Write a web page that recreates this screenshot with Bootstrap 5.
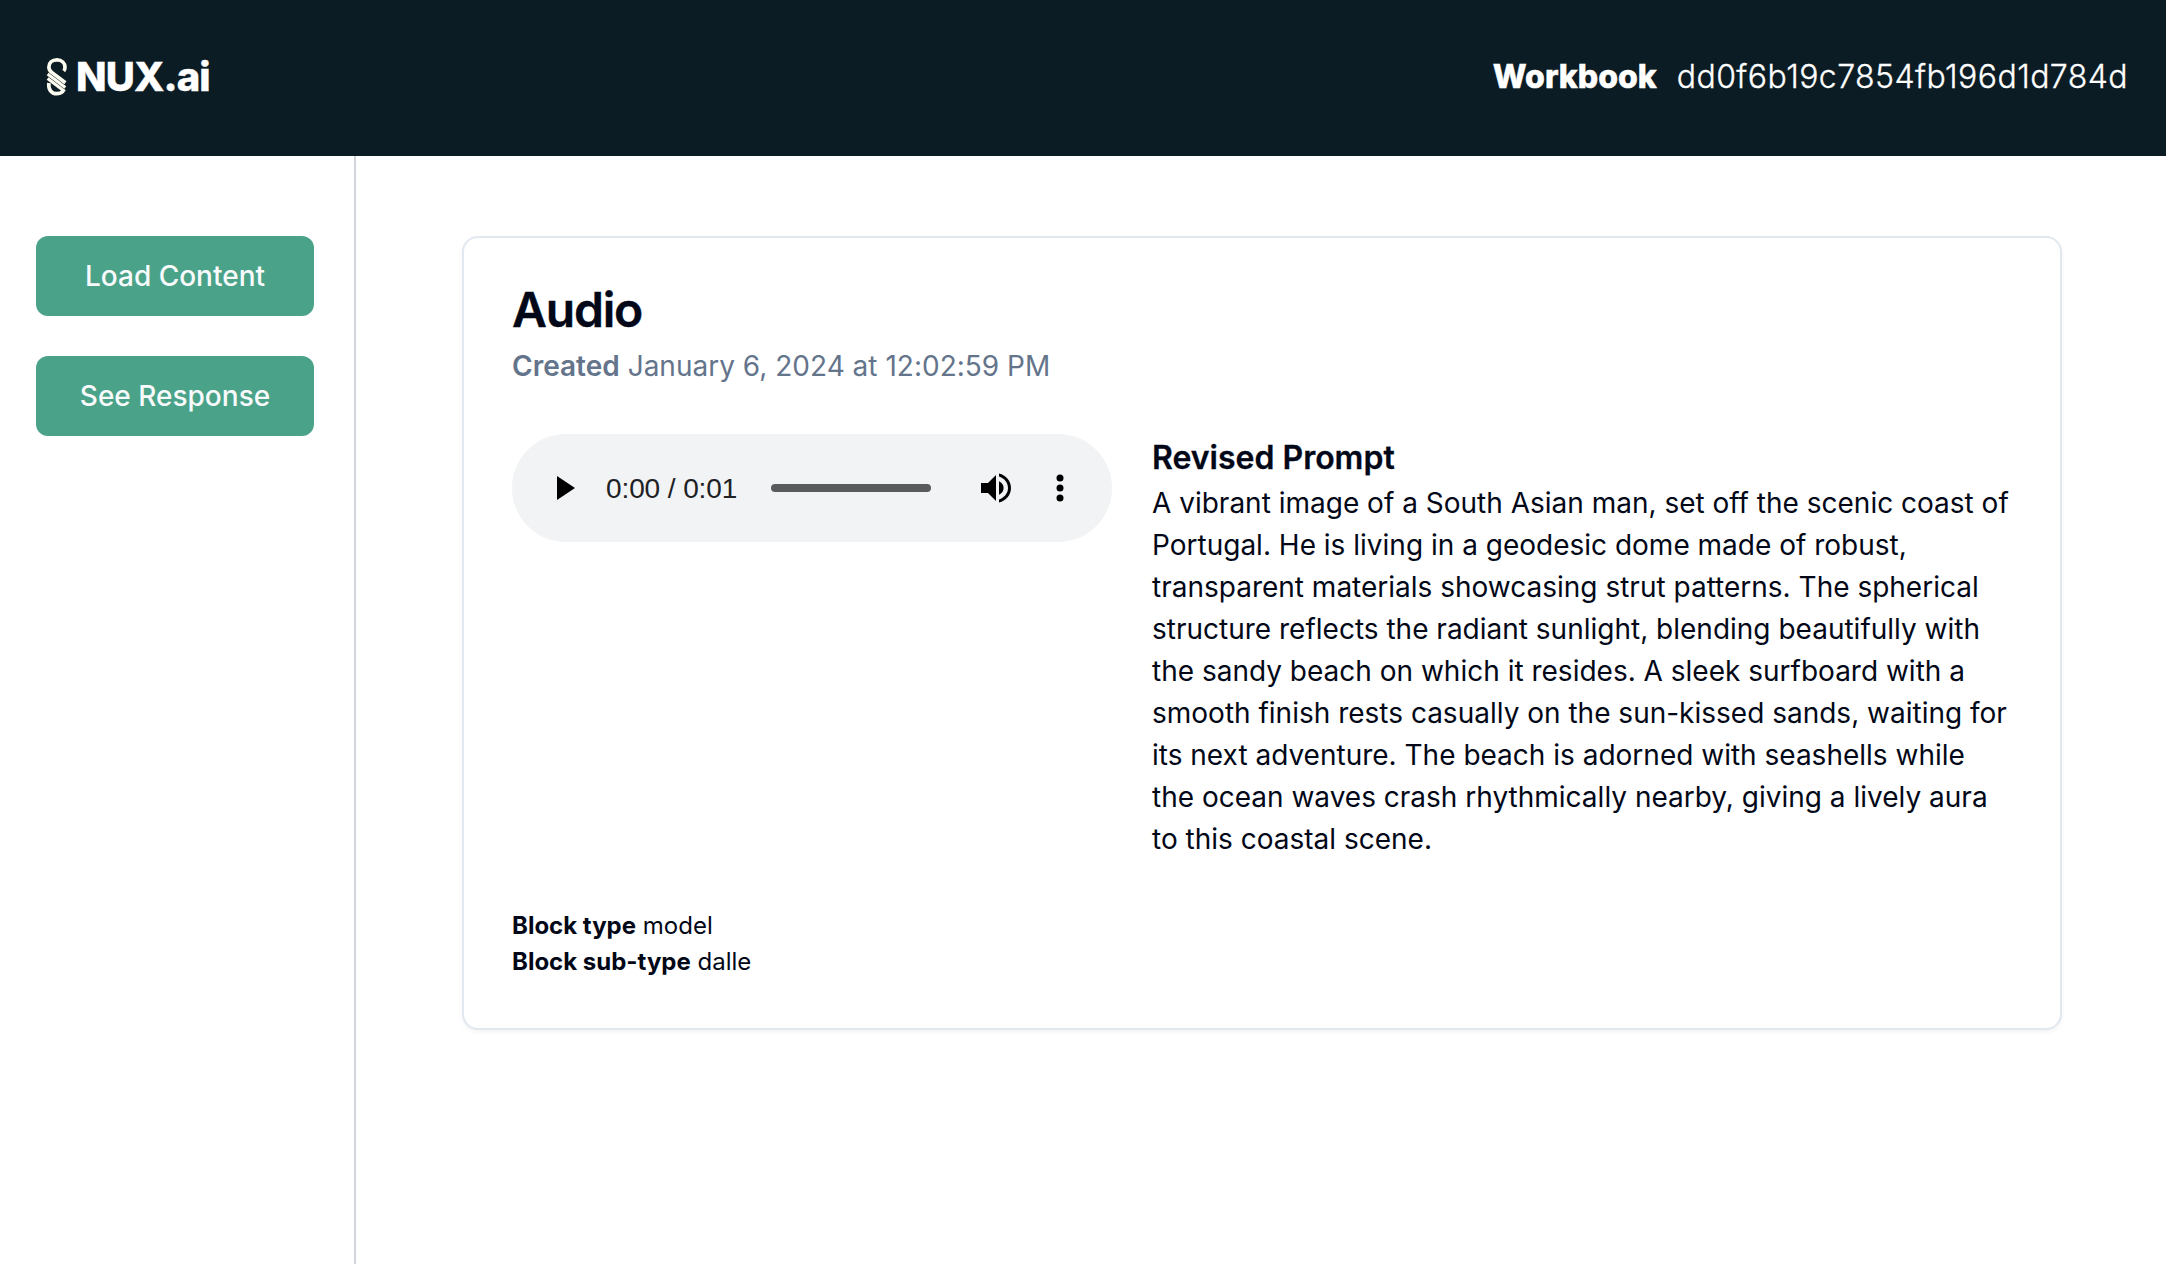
<!DOCTYPE html>
<html lang="en">
<head>
<meta charset="utf-8">
<meta name="viewport" content="width=device-width, initial-scale=1">
<title>NUX.ai Workbook</title>
<link href="https://cdn.jsdelivr.net/npm/bootstrap@5.3.0/dist/css/bootstrap.min.css" rel="stylesheet">
<style>
  body { font-family: Inter, "Liberation Sans", sans-serif; color: #020817; background: #fff; font-size: 28px; line-height: 42px; }
  .topbar { height: 156px; background: #0c1c24; color: #fff; padding: 0 38px 2px 46px; }
  .brand-name { font-size: 40px; font-weight: 800; line-height: 60px; letter-spacing: -.9px; -webkit-text-stroke: .4px; }
  .book { font-size: 32px; line-height: 48px; gap: 20px; }
  .book-label { font-weight: 800; -webkit-text-stroke: .5px; }
  .book-id { font-weight: 300; letter-spacing: .43px; -webkit-text-stroke: .3px; }
  .side { width: 356px; border-right: 2px solid #d1d5db; padding: 80px 40px 0 36px; gap: 40px; }
  .btn-green { --bs-btn-color: #f8fafc; --bs-btn-bg: #4aa389; --bs-btn-hover-color: #fff; --bs-btn-hover-bg: #3f9179;
    height: 80px; border: 0; border-radius: 12px; font-size: 28px; font-weight: 500; line-height: 40px; }
  .stage { padding: 80px 104px 0 106px; }
  .block-card { border: 2px solid #e2e8f0; border-radius: 16px; padding: 48px; height: 794px; box-shadow: 0 2px 4px rgba(0,0,0,.05); color: inherit; }
  .block-title { font-size: 48px; font-weight: 600; line-height: 48px; letter-spacing: -1.2px; margin-bottom: 12px; -webkit-text-stroke: .4px; }
  .created { color: #64748b; line-height: 40px; margin-bottom: 48px; letter-spacing: .01px; }
  .content-row { gap: 40px; }
  .player { width: 600px; height: 108px; border-radius: 54px; background: #f1f3f4; padding-left: 45px; }
  .clock { font-family: "Liberation Sans", sans-serif; color: #202124; white-space: nowrap; width: 131px; margin-left: 31px; padding-top: 2px; letter-spacing: -.1px; }
  .track { width: 160px; height: 8px; border-radius: 4px; background: #5a5a5a; margin-left: 34px; }
  .volume { margin-left: 50px; }
  .dots { margin-left: 45px; }
  .prompt-head { font-size: 32px; font-weight: 600; line-height: 48px; margin: 0; -webkit-text-stroke: .3px; }
  .prompt-col { white-space: nowrap; }
  .meta { font-size: 24px; line-height: 36px; }
</style>
</head>
<body class="vh-100 d-flex flex-column overflow-hidden">
<header class="topbar d-flex align-items-center justify-content-between">
  <div class="d-flex align-items-center">
    <svg width="22" height="40" viewBox="0 1 22 40" fill="none" stroke="#fcfbf0">
      <path d="M17.700 15C18.800 13.800 19 12.500 19 11.300C19 7 15.800 3.900 11 3.900C6 3.900 2.900 7 2.900 11C2.900 13.500 3.900 15 5.700 16.400L19.400 26.800" stroke-width="3.700"/>
      <path d="M1.600 17.900L19.300 31.400" stroke-width="3.100"/>
      <path d="M1.600 22.500L18.800 35.400" stroke-width="3.100"/>
      <path d="M2.900 27C2 33.500 5.500 37.700 10.800 37.700C13.500 37.700 15.300 37 17 35.300" stroke-width="3.700"/>
    </svg>
    <span class="brand-name ms-2">NUX.ai</span>
  </div>
  <div class="book d-flex">
    <span class="book-label">Workbook</span>
    <span class="book-id">dd0f6b19c7854fb196d1d784d</span>
  </div>
</header>
<div class="d-flex flex-grow-1">
  <aside class="side d-flex flex-column flex-shrink-0">
    <button type="button" class="btn btn-green w-100">Load Content</button>
    <button type="button" class="btn btn-green w-100">See Response</button>
  </aside>
  <main class="stage flex-grow-1">
    <section class="card block-card">
      <h1 class="block-title">Audio</h1>
      <p class="created"><span class="fw-semibold">Created</span> January 6, 2024 at 12:02:59 PM</p>
      <div class="d-flex content-row">
        <div class="player d-flex align-items-center flex-shrink-0">
          <svg width="18" height="24" viewBox="0 0 18 24"><path d="M0 0L18 12L0 24Z"/></svg>
          <span class="clock">0:00 / 0:01</span>
          <div class="track"></div>
          <svg class="volume" width="30" height="30" viewBox="0 0 30 30"><path d="M0 10H7L15 2V28L7 20H0ZM18 8.300C21 9.700 22.600 12 22.600 15S21 20.300 18 21.700ZM18 .5C25 2.200 30 8 30 15S25 27.800 18 29.500V26.400C23 24.800 27 20.500 27 15S23 5.200 18 3.600Z"/></svg>
          <svg class="dots" width="8" height="28" viewBox="0 0 8 28"><circle cx="4" cy="4" r="3.500"/><circle cx="4" cy="14" r="3.500"/><circle cx="4" cy="24" r="3.500"/></svg>
        </div>
        <div class="prompt-col">
          <h2 class="prompt-head">Revised Prompt</h2>
          <p class="mb-0">A vibrant image of a South Asian man, set off the scenic coast of<br>Portugal. He is living in a geodesic dome made of robust,<br>transparent materials showcasing strut patterns. The spherical<br>structure reflects the radiant sunlight, blending beautifully with<br>the sandy beach on which it resides. A sleek surfboard with a<br>smooth finish rests casually on the sun-kissed sands, waiting for<br>its next adventure. The beach is adorned with seashells while<br>the ocean waves crash rhythmically nearby, giving a lively aura<br>to this coastal scene.</p>
        </div>
      </div>
      <div class="meta mt-auto">
        <div><span class="fw-bold">Block type</span> model</div>
        <div><span class="fw-bold">Block sub-type</span> dalle</div>
      </div>
    </section>
  </main>
</div>
<script src="https://cdn.jsdelivr.net/npm/bootstrap@5.3.0/dist/js/bootstrap.bundle.min.js"></script>
</body>
</html>
